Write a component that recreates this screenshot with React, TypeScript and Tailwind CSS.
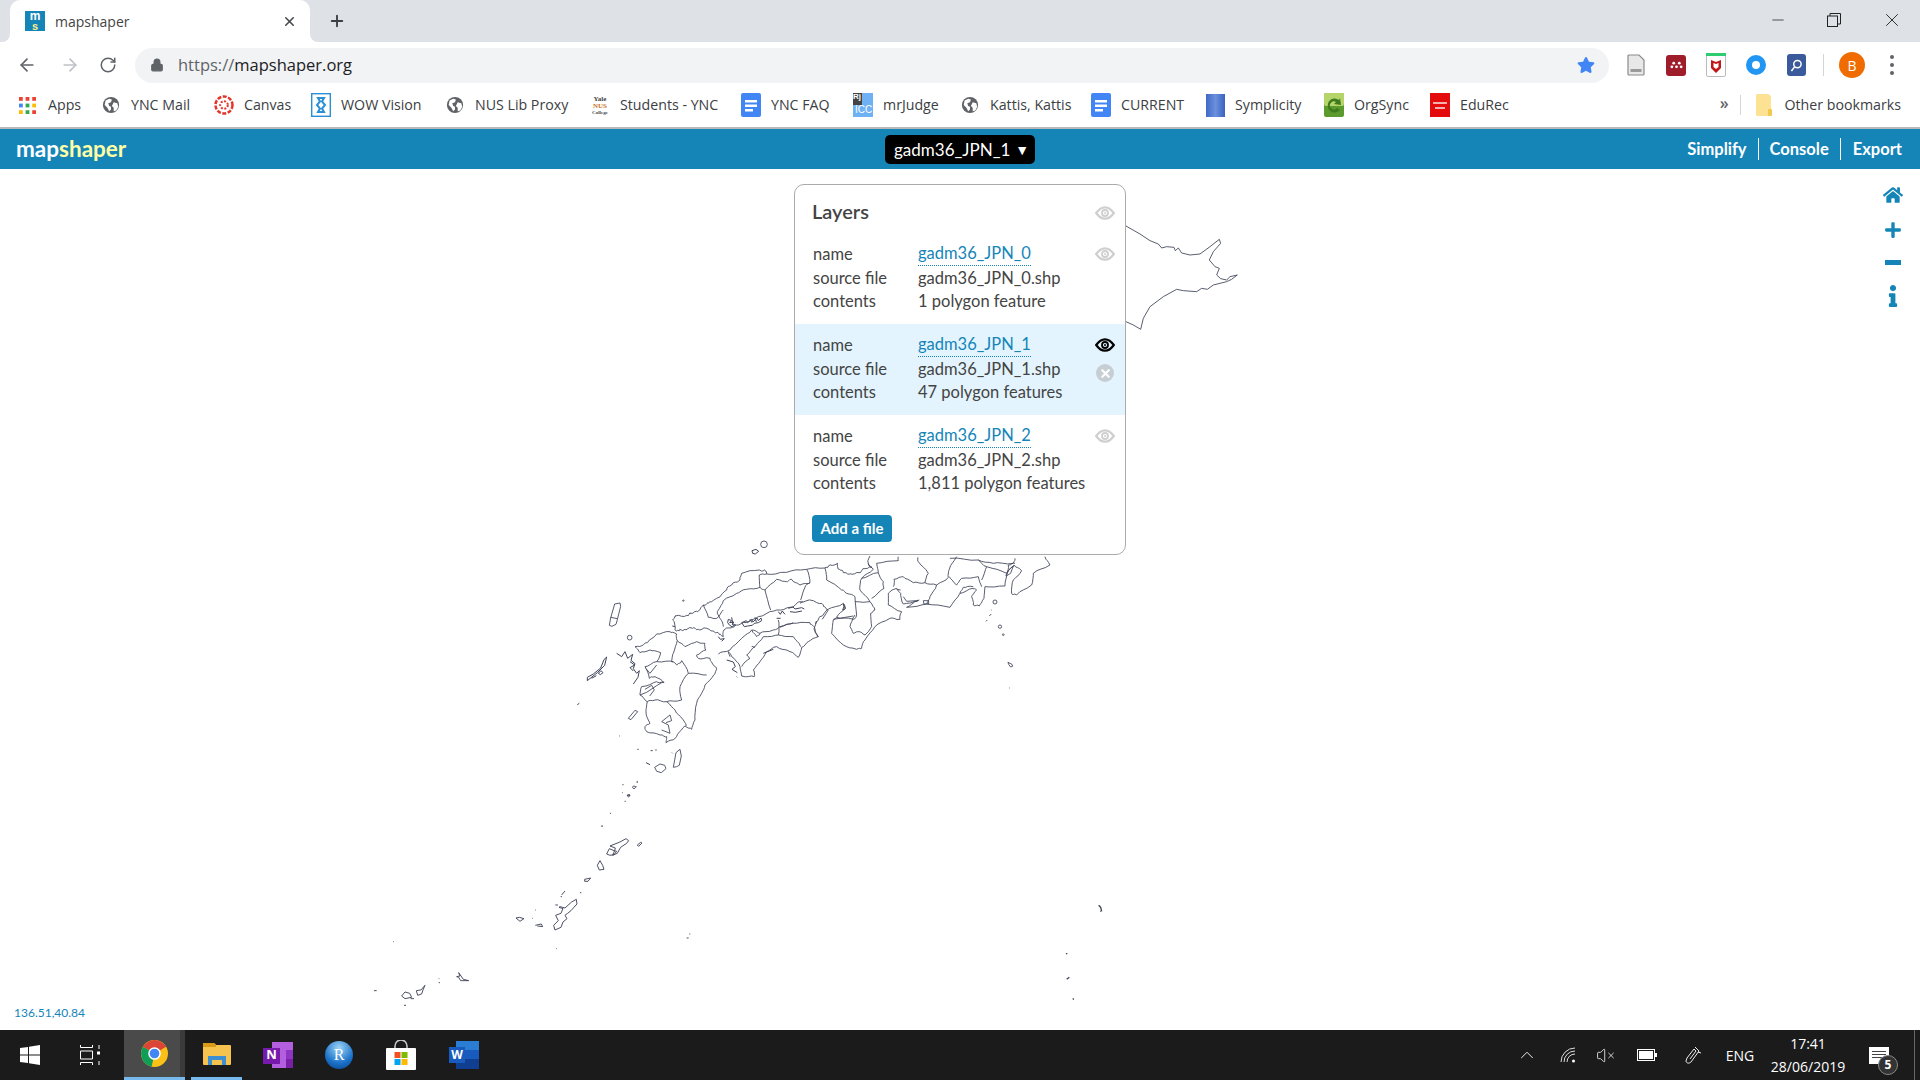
import { ArrowLeft, ArrowRight, RotateCw, Lock, Plus, X, Minus, ChevronUp, VolumeX } from "lucide-react"
import { FaHome, FaPlus, FaInfo, FaStar } from "react-icons/fa"

const Globe = () => (
  <svg viewBox="0 0 20 20" className="w-[18px] h-[18px]">
    <circle cx="10" cy="10" r="9" fill="#5f6368" />
    <path d="M4 5l4-2 3 1-1 3-3 1 1 3 2 1 0 3-2 2-2-4-3-3zM13 7l4 1 1 4-2 4-3 1 0-4-2-2z" fill="#fff" />
  </svg>
)

const Doc = () => (
  <svg viewBox="0 0 20 24" className="w-5 h-6">
    <rect width="20" height="24" rx="2" fill="#4285f4" />
    <path d="M4 7h12v2.500H4zM4 11.500h12V14H4zM4 16h8v2.500H4z" fill="#fff" />
  </svg>
)

const AppsIcon = () => (
  <svg viewBox="0 0 18 18" className="w-[17px] h-[17px]">
    {[
      [0, 0, "#ea4335"], [7, 0, "#ea4335"], [14, 0, "#ea4335"],
      [0, 7, "#4285f4"], [7, 7, "#34a853"], [14, 7, "#fbbc05"],
      [0, 14, "#fbbc05"], [7, 14, "#34a853"], [14, 14, "#ea4335"],
    ].map(([x, y, c], i) => <rect key={i} x={x} y={y} width="4" height="4" fill={c as string} />)}
  </svg>
)

const CanvasIcon = () => (
  <svg viewBox="0 0 20 20" className="w-5 h-5" fill="none">
    <circle cx="10" cy="10" r="8.500" stroke="#e3352b" strokeWidth="2.500" strokeDasharray="4 1.500" />
    <circle cx="10" cy="10" r="3.800" stroke="#e3352b" strokeWidth="2" strokeDasharray="2 1.500" />
  </svg>
)

const WowIcon = () => (
  <svg viewBox="0 0 20 24" className="w-5 h-6" fill="none">
    <rect x=".7" y=".7" width="18.600" height="22.600" fill="#fff" stroke="#2b8fd6" strokeWidth="1.400" />
    <path d="M7 5h6l-2 3.500 3 3.500-3 3.500 2 3.500H7l2-3.500L6 12l3-3.500z" stroke="#2b8fd6" strokeWidth="2" />
  </svg>
)

const YaleIcon = () => (
  <div className="w-5 h-6 flex flex-col items-center justify-center font-['Liberation_Serif',serif] text-[7px] font-bold leading-[7px] text-[#444]">
    <span>Yale</span>
    <span className="text-[#c8701e]">NUS</span>
    <span className="text-[5px] leading-[5px]">College</span>
  </div>
)

const JudgeIcon = () => (
  <div className="w-5 h-6 bg-[#6fb1f5] flex flex-col overflow-hidden font-['Liberation_Sans',sans-serif] leading-none">
    <span className="w-[9px] h-3 bg-[#444] text-white text-[8px] font-bold">Rj</span>
    <span className="text-white text-[10px] pl-[2px]">ICC</span>
  </div>
)

const SympIcon = () => <div className="w-[19px] h-[23px] bg-gradient-to-r from-[#4068c8] via-[#6c90dc] to-[#3a62c0]" />

const OrgIcon = () => (
  <svg viewBox="0 0 20 24" className="w-5 h-6">
    <rect width="20" height="24" rx="2" fill="#5b9a2c" />
    <rect width="20" height="13" rx="2" fill="#b5d56a" />
    <path d="M15 7a7 7 0 1 0 1 10l-3-2a4 4 0 1 1-1-6l-2 2 7 1-1-7z" fill="#3f7a1e" />
  </svg>
)

const OracleIcon = () => (
  <div className="w-5 h-6 bg-[#e30b0b] flex flex-col items-center justify-center gap-[3px]">
    <span className="w-[14px] h-[2px] bg-[#f7b0b0]" />
    <span className="w-[10px] h-[2px] bg-[#f7b0b0]" />
  </div>
)

const FolderIcon = () => (
  <svg viewBox="0 0 16 22" className="w-4 h-[22px]">
    <path d="M0 1.500A1.500 1.500 0 0 1 1.500 0h11L15 2.500V20.500a1.500 1.500 0 0 1-1.500 1.500h-12A1.500 1.500 0 0 1 0 20.500z" fill="#fde293" />
    <rect x="12" y="15" width="4" height="7" rx="1" fill="#f2c94c" />
  </svg>
)

const bookmarks = [
  { label: "Apps", width: "w-[84px]", gap: "gap-[11px]", icon: <AppsIcon /> },
  { label: "YNC Mail", width: "w-[113px]", icon: <Globe /> },
  { label: "Canvas", width: "w-[97px]", icon: <CanvasIcon /> },
  { label: "WOW Vision", width: "w-[134px]", icon: <WowIcon /> },
  { label: "NUS Lib Proxy", width: "w-[145px]", icon: <Globe /> },
  { label: "Students - YNC", width: "w-[151px]", icon: <YaleIcon /> },
  { label: "YNC FAQ", width: "w-[112px]", icon: <Doc /> },
  { label: "mrJudge", width: "w-[107px]", icon: <JudgeIcon /> },
  { label: "Kattis, Kattis", width: "w-[131px]", icon: <Globe /> },
  { label: "CURRENT", width: "w-[114px]", icon: <Doc /> },
  { label: "Symplicity", width: "w-[119px]", icon: <SympIcon /> },
  { label: "OrgSync", width: "w-[106px]", icon: <OrgIcon /> },
  { label: "EduRec", width: "w-[90px]", icon: <OracleIcon /> },
]

const layers = [
  { name: "gadm36_JPN_0", file: "gadm36_JPN_0.shp", contents: "1 polygon feature" },
  { name: "gadm36_JPN_1", file: "gadm36_JPN_1.shp", contents: "47 polygon features", active: true },
  { name: "gadm36_JPN_2", file: "gadm36_JPN_2.shp", contents: "1,811 polygon features" },
]

function Eye({ on = false }: { on?: boolean }) {
  const c = on ? "#000" : "#cfcfcf"
  return (
    <svg viewBox="0 0 20 14" className="w-5 h-[14px]" fill="none">
      <path d="M1.200 7C4 3 7 1.300 10 1.300S16 3 18.800 7C16 11 13 12.700 10 12.700S4 11 1.200 7z" stroke={c} strokeWidth="2.200" />
      <circle cx="10" cy="7" r="3" stroke={c} strokeWidth="1.800" />
      <circle cx="10" cy="7" r="1" fill={c} />
    </svg>
  )
}

function LayerRow({ name, file, contents, active }: { name: string; file: string; contents: string; active?: boolean }) {
  return (
    <div className={active ? "relative h-[91px] pl-[18px] pt-[8px] bg-[#e3f4fe]" : "relative h-[91px] pl-[18px] pt-[8px]"}>
      <div className="flex h-[26px] items-center">
        <span className="w-[105px]">name</span>
        <span className="text-[#1585b8] border-b border-dotted border-[#1585b8] h-[24px] leading-[23px]">{name}</span>
      </div>
      <div className="flex h-[23px] items-center">
        <span className="w-[105px]">source file</span>
        <span>{file}</span>
      </div>
      <div className="flex h-[23px] items-center">
        <span className="w-[105px]">contents</span>
        <span>{contents}</span>
      </div>
      <div className="absolute right-[10px] top-[14px] flex flex-col items-center gap-[12px]">
        <Eye on={active} />
        {active && (
          <div className="w-[18px] h-[18px] rounded-full bg-[#c6ced3] flex items-center justify-center">
            <X className="w-[13px] h-[13px] text-white" strokeWidth={4} />
          </div>
        )}
      </div>
    </div>
  )
}

// adds small wobble between traced points so the coast doesn't look straight
function jag(d: string, amp = 3) {
  return d
    .split("M")
    .filter(Boolean)
    .map((sub) => {
      const n = sub.replace("L", " ").trim().split(/\s+/).map(Number)
      let out = `M${n[0]} ${n[1]}`
      for (let i = 2; i + 1 < n.length; i += 2) {
        const [x0, y0, x1, y1] = [n[i - 2], n[i - 1], n[i], n[i + 1]]
        for (let t = 1; t < 4; t++) {
          const s = Math.sin(x1 * 12.9 + y1 * 78.2 + t * 37.7) * amp
          const c = Math.cos(x0 * 4.1 + y1 * 9.7 + t * 11.3) * amp
          out += ` L${(x0 + ((x1 - x0) * t) / 4 + s).toFixed(1)} ${(y0 + ((y1 - y0) * t) / 4 + c).toFixed(1)}`
        }
        out += ` L${x1} ${y1}`
      }
      return out
    })
    .join("")
}

function JapanMap() {
  return (
    <svg viewBox="0 169 1920 861" className="absolute inset-0 w-full h-full" fill="none" stroke="#3f4458" strokeWidth="2.600" strokeLinejoin="round">
      <g transform="translate(1100 220) scale(.3333)">
        <path d="M78 18L120 42 150 62 175 72 185 84 200 80 222 82 226 92 235 84 245 99 270 105 300 102 330 80 358 58 362 70 340 95 328 120 345 140 358 145 350 165 362 176 380 180 390 170 412 165 395 178 380 185 340 195 322 208 305 205 290 215 250 212 230 208 190 230 150 260 130 295 122 328 100 315 78 305" />
      </g>
      <g transform="translate(560 530) scale(.3333)">
        {/* honshu coast */}
        <path d={jag("M930 78L925 100 936 112 915 116 900 128 870 131 850 128 838 118 833 100 805 108 795 114 740 118 680 127 620 132 615 122 598 120 545 130 540 150 515 165 500 180 470 205 445 220 430 225 412 245 390 250 380 256 345 258 338 270 345 298 358 302 375 298 398 295 415 298 440 295 462 304 478 312 490 320 492 300 520 288 545 280 575 270 612 255 650 240 690 232 720 215 760 212 790 225 802 240 780 260 770 275 765 280")} />
        <path d={jag("M800 240L850 220 856 235 830 262 820 270 815 310 850 345 890 358 905 355 915 330 945 290 990 265 1020 268 1025 245 985 225 985 190 1010 175 1022 190 1030 222 1075 212 1040 232 1100 222 1170 232 1200 190 1240 175 1250 180 1235 200 1240 225 1258 228 1272 205 1275 170 1335 168 1345 122 1362 105 1385 122 1360 150 1355 190 1370 195 1415 165 1420 130 1470 105 1455 80", 2)} />
        {/* honshu inner borders */}
        <path d={jag("M740 118L750 158 735 172 722 210M620 132L598 135 600 172 615 180 632 240M600 172L560 178 530 190 490 212 472 245 480 265 490 290M615 180L650 148 680 155 695 148 720 165 750 158M430 225L445 262 470 265 490 240M795 114L800 150 845 180 860 190 885 200 890 255 880 268 830 262M885 215L930 215 945 240 932 250 935 290 915 315 900 305 880 310 870 290 885 255M930 215L900 180 905 145 940 118 925 100M905 145L955 128 970 155 972 175 935 205M955 128L950 100 1015 92 1015 80M1000 170L1002 148 1030 140 1060 158 1095 158 1130 165 1165 142 1168 118 1190 80M1095 158L1105 130 1075 95 1075 82M1130 165L1110 200 1100 222M1168 140L1190 165 1205 145 1255 140 1265 170M1200 190L1210 172 1240 170M1265 150L1280 110 1255 90 1170 85M1280 110L1340 130 1345 105 1365 100M1255 90L1300 100 1360 100 1365 85", 2)} />
        <path d="M1010 178L1022 180M1030 200l10 14 30-2 8-2M1090 212l16 0 0 10-14 0zM1340 130l12-16 8-6-8 22-8 5-6 3zM770 275l-8 22 12 24M820 268l60-10M805 240l-18 28" />
        {/* inland sea scribble */}
        <path d="M505 268l10 4-6 6 12-2-4 8 10 2-8 6-10-6-6-8zM515 262l4 22M545 278l14-6 4 6 12-10 4 8 12-12 4 8 8-8 2 8-10 6-12 2-6 6-14 2-10 2zM570 268l6 10M585 262l4 14M655 245l6 8 6-10 8 10M685 235l14-4 6 6 20-4 8 4M690 245l16 2 20-4M720 220l8-6M475 320l6 8 12-2-8 8M345 290l-8-2M650 265l12 0M850 222l6 14-8 4 4-10z" strokeWidth="3" />
        <circle cx="370" cy="212" r="2" />
        {/* shikoku */}
        <path d={jag("M475 372L510 360 545 325 575 300 600 310 640 300 660 290 700 280 750 278 762 290 765 300 775 320 745 335 725 352 715 382 690 365 650 350 620 365 600 395 580 420 583 440 545 438 540 410 522 385 505 365 510 380", 2)} />
        <path d={jag("M575 300L590 320 600 310M585 350L610 320 655 315 700 320 722 350M655 270L655 315M660 292L700 278M575 350L585 350 560 375 570 385 545 410", 2)} />
        <path d="M500 390l20 6 6 14-10 8 16 10M530 440l2 2M610 370l30-12" strokeWidth="3" />
        {/* kyushu */}
        <path d={jag("M290 312L330 305 350 312 352 332 375 350 410 335 435 340 438 360 410 375 415 385 450 385 458 402 470 418 462 434 435 465 425 490 410 520 405 570 395 598 375 588 355 610 345 625 318 638 320 620 300 615 260 605 255 590 270 580 258 545 262 515 240 495 245 470 290 455 312 458 285 440 268 445 255 410 290 395 302 368 270 360 240 368 225 350 250 345 262 338 290 312", 2)} />
        <path d={jag("M352 332L340 370 335 395 350 405 365 392 385 430 440 435M385 430L360 470 365 510 320 515 285 510 262 515M290 395L340 395M320 515L345 540 370 570 378 588", 2)} />
        <path d="M305 600L330 610 325 585 305 575 330 555 335 572 318 578M240 495l20-8 30-20 20-12M255 478l20-12 8 14-14 18M290 405l-20 25-12-14" />
        <path d="M170 370l15 10 10-15 8 20 15-12-5 18 12 10-5 15 10 14 8-8-4 20-14 20M210 395l14 10-14 8 10 10" strokeWidth="3" />
        <path d="M82 452l30-24 22-22 6-25-8 8-10 25-22 18-18 10zM115 430l8-8 6 6-8 6zM95 445l14-8" strokeWidth="3" />
        <path d="M148 286l4-22 12-42 16-3 2 10-10 40-4 14-12 6zM152 262l20 4" />
        <path d="M205 565l20-24 8 4-20 24z" />
        <circle cx="209" cy="323" r="7" />
        <circle cx="612" cy="43" r="10" />
        <path d="M576 62l12-4 8 6-10 8-8-2z" strokeWidth="3" />
        <circle cx="1305" cy="216" r="6" />
        <circle cx="1320" cy="290" r="5" />
        <circle cx="1330" cy="314" r="2.500" />
        <path d="M1344 397l12 6 2 6-6 2-6-8zM1278 274l4-4M1288 258l6-6M1293 240l2 0M1348 474l2 0" />
        {/* southern islands */}
        <path d="M340 712l8-44 12-10 4 20-6 28-8 4zM300 702l14 4 4 10-14 12-14-4-6-12z" />
        <path d="M258 698l12 6M336 668l2 2M272 662l6 0M286 660l4 0M232 658l4 0M178 618l2 0M52 524l6-4M222 768a4 4 0 1 0 .1 0M205 794a3 3 0 1 0 .1 0M230 756l3 0M188 764l2 0M186 788l2 0M194 814l2 0M150 850l2 0M124 888l4 0" strokeWidth="3" />
      </g>
      <g transform="translate(350 780) scale(.3333)">
        <path d="M780 198l30-12 18-10 8 6-6 8-18 12-10 18-14 6 6-14 2-8zM770 222l8-16 14 6 8 2-8 10-12 2zM862 195l10-8 4 2-10 10zM750 242l8 14 4 12-14 2-6-14zM704 298l18-4-8 10-10 0zM635 345l10-12M632 350l4 0M690 338l4 0M616 375l8 0M630 380l15 4 20-18 14-8 2 14-18 20-10 8-8 6 6 10-12 10-6 16-18 8-4-14 14-14-8-16 16-6 6-14-12-4zM556 390l2 0M546 415l2 0M498 414l10-2 14 4-12 8zM556 436l18-4 4 8-16-2M618 506l2 0M130 485l2 0M780 100l2 0M755 139l3 0M856 20l4 0M838 44a2 2 0 1 0 .1 0M825 64l2 0M860 6l4 0M818 14l2 0M1010 474l6 0M1018 462l3 0M320 590l10-2-4-10 14 20 16 4-24 0-6-10zM266 596l2 0M266 608l4 0M225 616l-12 14-14 2 4 14 12-4 4-12zM155 648l10-12 14 4 6 12-20 4zM72 632l8 0M162 676l6 0M182 656l10 0" strokeWidth="2.800" />
      </g>
      <g transform="translate(1040 890) scale(.3333)">
        <path d="M176 46l6 6 3 12M180 64l2 0M78 190l4 2M80 268l8-6M100 325l0 4" strokeWidth="4" />
      </g>
    </svg>
  )
}

function Flare({ right = false }: { right?: boolean }) {
  return (
    <svg viewBox="0 0 8 8" className={right ? "absolute bottom-0 right-[-8px] w-2 h-2 scale-x-[-1]" : "absolute bottom-0 left-[-8px] w-2 h-2"}>
      <path d="M8 0v8H0A8 8 0 0 0 8 0z" fill="#fff" />
    </svg>
  )
}

const ChromeTop = () => (
  <>
    <div className="h-[42px] bg-[#dee1e6] flex items-end relative">
      <div className="relative ml-[10px] w-[300px] h-[42px] bg-white rounded-t-[10px] flex items-center pl-[15px] pr-[13px]">
        <Flare />
        <Flare right />
        <div className="w-5 h-5 bg-[#1585b8] flex flex-col items-center font-['Liberation_Sans',sans-serif] font-bold">
          <span className="text-white text-[12px] leading-[11px]">m</span>
          <span className="text-[#ffef8a] text-[11px] leading-[9px]">s</span>
        </div>
        <span className="ml-[10px] text-[14px] text-[#444]">mapshaper</span>
        <X className="ml-auto w-[15px] h-[15px] text-[#45484d]" strokeWidth={2.500} />
      </div>
      <Plus className="ml-[18px] mb-[12px] w-[18px] h-[18px] text-[#3c4043]" strokeWidth={2.500} />
      <div className="ml-auto flex items-center pr-[17px] self-start pt-[9px] gap-[40px] text-[#222]">
        <Minus className="w-[18px] h-[18px]" strokeWidth={1} />
        <svg viewBox="0 0 14 14" className="w-[14px] h-[14px]" fill="none" stroke="currentColor">
          <rect x=".5" y="3" width="10" height="10.500" />
          <path d="M3 3V.5h10.500V11H10.500" />
        </svg>
        <X className="w-[22px] h-[22px]" strokeWidth={1} />
      </div>
    </div>
    <div className="h-[46px] bg-white flex items-center pl-[8px]">
      <span className="w-[38px] flex justify-center"><ArrowLeft className="w-5 h-5 text-[#5f6368]" strokeWidth={2} /></span>
      <span className="w-[5px]" />
      <span className="w-[38px] flex justify-center"><ArrowRight className="w-5 h-5 text-[#bdc1c6]" strokeWidth={2} /></span>
      <span className="w-[38px] flex justify-center"><RotateCw className="w-[18px] h-[18px] text-[#5f6368]" strokeWidth={2} /></span>
      <div className="ml-[8px] w-[1474px] h-[35px] rounded-full bg-[#f1f3f4] flex items-center pl-[15px] pr-[14px]">
        <Lock className="w-[14px] h-[14px] text-[#5f6368]" fill="#5f6368" strokeWidth={2} />
        <span className="ml-[14px] text-[16.500px] text-[#5f6368]">https://<span className="text-[#202124]">mapshaper.org</span></span>
        <FaStar className="ml-auto w-[18px] h-[18px] text-[#4285f4]" />
      </div>
      <div className="ml-[7px] flex items-center">
        <span className="w-10 flex justify-center">
          <svg viewBox="0 0 18 22" className="w-[18px] h-[22px]">
            <path d="M1 2a1 1 0 0 1 1-1h10l5 5v14a1 1 0 0 1-1 1H2a1 1 0 0 1-1-1z" fill="#e8e8e8" stroke="#8a8a8a" strokeWidth="1.200" />
            <rect x="3.500" y="15" width="11" height="3" fill="#9a9a9a" />
          </svg>
        </span>
        <span className="w-10 flex justify-center">
          <span className="w-5 h-[21px] rounded-[3px] bg-[#9f1c2b] flex items-center justify-center">
            <svg viewBox="0 0 14 8" className="w-[13px] h-2" fill="#fff"><circle cx="4" cy="2" r="1.500" /><circle cx="10" cy="2" r="1.500" /><circle cx="2" cy="6" r="1.500" /><circle cx="7" cy="6" r="1.500" /><circle cx="12" cy="6" r="1.500" /></svg>
          </span>
        </span>
        <span className="w-10 flex justify-center">
          <svg viewBox="0 0 20 24" className="w-5 h-6">
            <rect x=".5" y=".5" width="19" height="23" rx="1.500" fill="#fff" stroke="#bbb" />
            <rect width="20" height="3" fill="#2ecc71" />
            <path d="M5 7l5 2 5-2v8l-5 5-5-5z" fill="#c01818" />
            <path d="M7.500 10l2.500 1 2.500-1v4L10 16l-2.500-2z" fill="#fff" />
          </svg>
        </span>
        <span className="w-10 flex justify-center">
          <span className="w-5 h-5 rounded-full border-[6px] border-[#2196f3] bg-white" />
        </span>
        <span className="w-10 flex justify-center">
          <span className="w-[19px] h-[22px] rounded-[3px] bg-[#3a5a9c] flex items-center justify-center">
            <svg viewBox="0 0 14 14" className="w-[13px] h-[13px]" fill="none" stroke="#fff" strokeWidth="1.600"><circle cx="8" cy="5.500" r="4" /><path d="M5 8.500L1.500 13" /></svg>
          </span>
        </span>
        <span className="ml-[7px] w-px h-[22px] bg-[#d5d5d5]" />
        <span className="ml-[15px] w-[26px] h-[26px] rounded-full bg-[#f06c00] text-white text-[14px] flex items-center justify-center">B</span>
        <span className="ml-[25px] flex flex-col gap-[4px]">
          <span className="w-1 h-1 rounded-full bg-[#5f6368]" />
          <span className="w-1 h-1 rounded-full bg-[#5f6368]" />
          <span className="w-1 h-1 rounded-full bg-[#5f6368]" />
        </span>
      </div>
    </div>
    <div className="h-[41px] bg-white border-b-2 border-[#b9b9b9] flex items-center pl-[17px] pb-[5px] text-[14.200px] text-[#3c4043]">
      {bookmarks.map((b) => (
        <div key={b.label} className={`${b.width} flex items-center ${b.gap ?? "gap-[10px]"} shrink-0`}>
          <span className="w-5 h-6 flex items-center justify-center shrink-0">{b.icon}</span>
          <span className="whitespace-nowrap">{b.label}</span>
        </div>
      ))}
      <span className="ml-auto mr-[11px] text-[16px] font-semibold text-[#5f6368] leading-none pb-[5px]">»</span>
      <span className="w-px h-[20px] bg-[#d5d5d5]" />
      <span className="ml-[15px] mr-[13px]"><FolderIcon /></span>
      <span className="mr-[19px] whitespace-nowrap">Other bookmarks</span>
    </div>
  </>
)

const ChromeLogo = () => (
  <svg viewBox="0 0 28 28" className="w-[27px] h-[27px]">
    <circle cx="14" cy="14" r="14" fill="#fbc116" />
    <path d="M14 14L2 7A14 14 0 0 1 26.100 7z" fill="#db4437" />
    <path d="M14 14L2 7A14 14 0 0 0 11 27.700L14 14z" fill="#0f9d58" />
    <circle cx="14" cy="14" r="6.500" fill="#fff" />
    <circle cx="14" cy="14" r="5" fill="#4285f4" />
  </svg>
)

function Taskbar() {
  return (
    <div className="h-[50px] bg-[#1b1b1b] flex items-stretch text-white font-['Open_Sans',sans-serif]">
      <span className="w-[60px] flex items-center justify-center">
        <svg viewBox="0 0 20 20" className="w-5 h-5" fill="#fff"><path d="M0 3l8-1v7.500H0zM9 1.800L20 0v9.500H9zM0 10.500h8V18l-8-1zM9 10.500h11V20l-11-1.800z" /></svg>
      </span>
      <span className="w-[60px] flex items-center justify-center">
        <svg viewBox="0 0 20 20" className="w-5 h-5" fill="none" stroke="#fff"><path d="M.5 0v2.500h12V0M.5 20v-2.500h12V20M.5 6h12v8H.5zM19 0v4M19 16v4" /><rect x="17" y="6.500" width="3" height="3" fill="#fff" stroke="none" /></svg>
      </span>
      <span className="ml-[4px] w-[61px] bg-[#4a4a4a] border-b-[3px] border-[#76b9ed] flex items-center justify-center pr-[1px] relative">
        <ChromeLogo />
        <span className="absolute right-0 top-0 bottom-0 w-[5px] bg-[#3a3a3a]" />
      </span>
      <span className="ml-[6px] w-[51px] border-b-[3px] border-[#76b9ed] flex items-center justify-center">
        <svg viewBox="0 0 28 24" className="w-7 h-6">
          <path d="M0 2a1 1 0 0 1 1-1h10l2 2h14a1 1 0 0 1 1 1v18a1 1 0 0 1-1 1H1a1 1 0 0 1-1-1z" fill="#f6c44e" />
          <path d="M0 2a1 1 0 0 1 1-1h10l2 2v2H0z" fill="#d99b16" />
          <path d="M5 14h18v9h-4v-5H9v5H5z" fill="#3d8fd1" />
        </svg>
      </span>
      <span className="ml-[21px] w-[30px] flex items-center justify-center">
        <svg viewBox="0 0 30 26" className="w-[30px] h-[26px]">
          <rect x="9" width="21" height="26" fill="#b45fe0" />
          <rect x="23" y="8" width="7" height="9" fill="#8f35c4" />
          <rect x="23" y="17" width="7" height="9" fill="#7a1fa8" />
          <rect y="6" width="17" height="16" fill="#7719aa" />
        </svg>
        <span className="absolute ml-[-13px] mt-[-1px] text-[13px] font-bold">N</span>
      </span>
      <span className="ml-[31px] w-[30px] flex items-center justify-center">
        <span className="w-[28px] h-[28px] rounded-full bg-[radial-gradient(circle_at_50%_25%,#9fd4f6,#1b72c9_60%,#0a3f8c)] flex items-center justify-center text-[16px] font-['Liberation_Serif',serif]">R</span>
      </span>
      <span className="ml-[32px] w-[30px] flex items-center justify-center">
        <svg viewBox="0 0 30 30" className="w-[30px] h-[30px]">
          <path d="M9 8V6a6 6 0 0 1 12 0v2" fill="none" stroke="#ccc" strokeWidth="1.500" />
          <rect y="8" width="30" height="22" rx="1" fill="#fff" />
          <rect x="8.500" y="12" width="6" height="6" fill="#f25022" />
          <rect x="15.500" y="12" width="6" height="6" fill="#7fba00" />
          <rect x="8.500" y="19" width="6" height="6" fill="#00a4ef" />
          <rect x="15.500" y="19" width="6" height="6" fill="#ffb900" />
        </svg>
      </span>
      <span className="ml-[33px] w-[30px] flex items-center justify-center">
        <svg viewBox="0 0 30 28" className="w-[30px] h-[28px]">
          <rect x="7" width="23" height="28" fill="#2b7cd3" />
          <rect x="7" y="9" width="23" height="9" fill="#185abd" />
          <rect x="7" y="18" width="23" height="10" fill="#103f91" />
          <rect y="6" width="16" height="16" fill="#185abd" />
        </svg>
        <span className="absolute ml-[-14px] mt-[-1px] text-[12px] font-bold">W</span>
      </span>
      <div className="ml-auto flex items-center">
        <ChevronUp className="w-[22px] h-[22px]" strokeWidth={1} />
        <svg viewBox="0 0 16 16" className="ml-[22px] w-4 h-4" fill="none" stroke="#ddd"><path d="M1 15A14 14 0 0 1 15 1M4 15A11 11 0 0 1 15 4M7 15a8 8 0 0 1 8-8" /><circle cx="13.500" cy="14" r="1.500" fill="#fff" stroke="none" /></svg>
        <span className="ml-[20px]"><VolumeX className="w-[19px] h-[19px]" strokeWidth={1} /></span>
        <svg viewBox="0 0 20 12" className="ml-[22px] w-5 h-3" fill="none" stroke="#fff"><rect x=".5" y=".5" width="17" height="11" /><rect x="2" y="2" width="14" height="8" fill="#fff" stroke="none" /><rect x="18" y="4" width="2" height="4" fill="#fff" stroke="none" /></svg>
        <svg viewBox="0 0 20 20" className="ml-[26px] w-5 h-5" fill="none" stroke="#eee"><path d="M12 2l4 4-8 11c-2 2-5 1-5-1l1-3 7-9 2 2-6 8" /><path d="M15 7l3 1" /></svg>
        <span className="ml-[20px] w-[34px] text-[14px] text-center">ENG</span>
        <div className="ml-[9px] w-[84px] text-[14px] leading-[23px] text-center">
          <div>17:41</div>
          <div>28/06/2019</div>
        </div>
        <div className="relative ml-[19px] mr-[25px] w-[20px] h-[17px] bg-white flex flex-col gap-[2px] p-[3px] pt-[4px]">
          <span className="h-px bg-[#444]" /><span className="h-px bg-[#444]" /><span className="h-px bg-[#444]" />
          <span className="absolute left-[9px] top-[8px] w-[20px] h-[20px] rounded-full bg-[#333] border border-[#888] text-[12px] font-bold flex items-center justify-center">5</span>
        </div>
        <span className="w-px self-stretch bg-[#666] mr-[5px]" />
      </div>
    </div>
  )
}

export default function App() {
  return (
    <div className="h-[1080px] flex flex-col overflow-hidden bg-white font-['Open_Sans',sans-serif]">
      <ChromeTop />
      <header className="h-[40px] bg-[#1585b8] flex items-center justify-between font-['Lato',sans-serif] text-white text-[17px] relative">
        <div className="pl-[16px] text-[22.500px] font-bold">map<span className="text-[#ffffa6]">shaper</span></div>
        <div className="absolute left-[885px] top-[6px] w-[150px] h-[29px] rounded-[5px] bg-black flex items-center pl-[9px] whitespace-nowrap">gadm36_JPN_1 <span className="ml-[5px] text-[14px]">▼</span></div>
        <nav className="flex items-center pr-[18px] font-bold text-[16.500px]">
          <span className="pr-[11px] border-r border-white h-[22px] leading-[22px]">Simplify</span>
          <span className="px-[11px] border-r border-white h-[22px] leading-[22px]">Console</span>
          <span className="pl-[12px] h-[22px] leading-[22px]">Export</span>
        </nav>
      </header>
      <main className="relative flex-1 overflow-hidden">
        <JapanMap />
        <div className="absolute left-[794px] top-[15px] w-[332px] h-[371px] bg-white border border-[#aaa] rounded-[10px] overflow-hidden font-['Lato',sans-serif] text-[16.500px] text-[#444]">
          <div className="h-[48px] pl-[17px] flex items-center justify-between pr-[10px] pt-[8px]">
            <h2 className="text-[20px] font-semibold text-[#444] -mt-[4px]">Layers</h2>
            <Eye />
          </div>
          {layers.map((l) => <LayerRow key={l.name} {...l} />)}
          <button className="ml-[17px] mt-[9px] w-[80px] h-[27px] rounded-[4px] bg-[#1585b8] text-white text-[15px] font-bold">Add a file</button>
        </div>
        <div className="absolute right-[17px] top-[16px] flex flex-col items-center text-[#1585b8]">
          <FaHome className="w-[20px] h-[20px]" />
          <FaPlus className="mt-[16px] w-[18px] h-[18px]" />
          <span className="mt-[21px] w-4 h-[5px] bg-[#1585b8]" />
          <FaInfo className="mt-[20px] w-[20px] h-[22px]" />
        </div>
        <div className="absolute left-[14px] bottom-[8px] text-[12px] text-[#1585b8] font-['Lato',sans-serif]">136.51,40.84</div>
      </main>
      <Taskbar />
    </div>
  )
}
